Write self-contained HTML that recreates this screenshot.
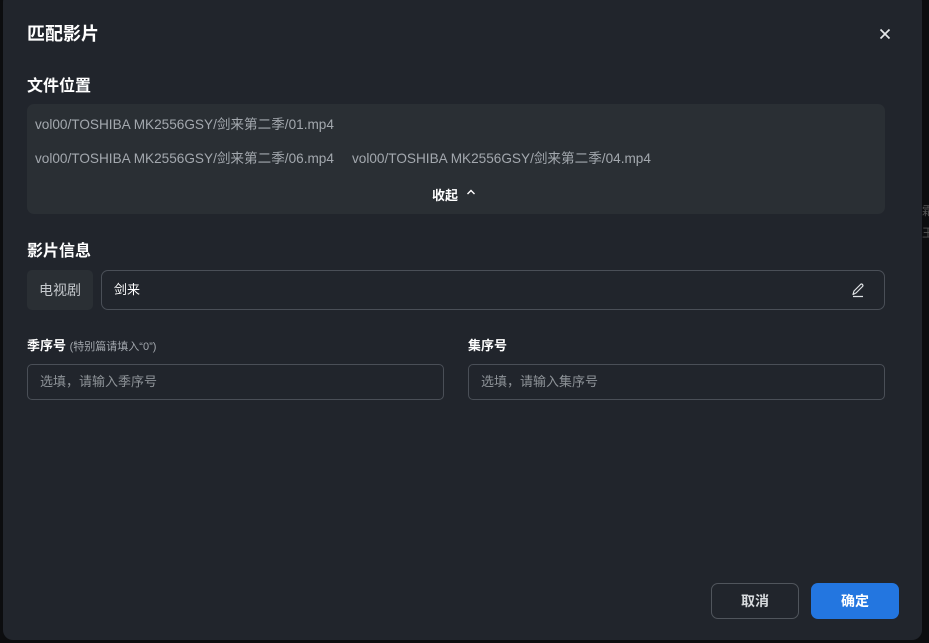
<!DOCTYPE html>
<html><head><meta charset="utf-8"><style>
*{box-sizing:border-box;margin:0;padding:0}
body{width:929px;height:643px;background:#0c0d0f;font-family:"Liberation Sans","Noto Sans CJK SC",sans-serif;position:relative;overflow:hidden}
.side{position:absolute;left:922px;color:#555;font-size:12px}
.dlg{position:absolute;left:3px;top:-8px;width:919px;height:648px;background:#21252c;border-radius:10px}
.abs{position:absolute}
.h{color:#fff;font-weight:bold}
.path{color:#a3a8ae;font-size:13.6px}
</style></head><body>
<div class="side" style="top:202px">霜</div>
<div class="side" style="top:224px">王</div>
<div class="dlg"></div>
<div class="abs h" style="left:27px;top:20px;font-size:18px">匹配影片</div>
<svg class="abs" style="left:879px;top:28px" width="12" height="12" viewBox="0 0 12 12"><path d="M1.5 1.5L10.5 10.5M10.5 1.5L1.5 10.5" stroke="#e6e8ea" stroke-width="1.7"/></svg>
<div class="abs h" style="left:27px;top:72px;font-size:16px">文件位置</div>
<div class="abs" style="left:27px;top:104px;width:858px;height:110px;background:#2a2f34;border-radius:7px"></div>
<div class="abs path" style="left:35px;top:113px">vol00/TOSHIBA MK2556GSY/剑来第二季/01.mp4</div>
<div class="abs path" style="left:35px;top:147px">vol00/TOSHIBA MK2556GSY/剑来第二季/06.mp4</div>
<div class="abs path" style="left:352px;top:147px">vol00/TOSHIBA MK2556GSY/剑来第二季/04.mp4</div>
<div class="abs" style="left:432px;top:185px;color:#fff;font-size:13px;font-weight:bold">收起</div>
<svg class="abs" style="left:466px;top:188px" width="10" height="8" viewBox="0 0 10 8"><path d="M1.5 6L5 2.5L8.5 6" stroke="#fff" stroke-width="1.4" fill="none"/></svg>
<div class="abs h" style="left:27px;top:237px;font-size:16px">影片信息</div>
<div class="abs" style="left:27px;top:270px;width:66px;height:40px;background:#2a2f34;border-radius:5px;color:#c5c9cd;font-size:14px;line-height:40px;text-align:center">电视剧</div>
<div class="abs" style="left:101px;top:270px;width:784px;height:40px;border:1px solid #4a4f57;border-radius:7px;color:#fff;font-size:13px;line-height:38px;padding-left:12px">剑来</div>
<svg class="abs" style="left:851px;top:282px" width="14" height="16" viewBox="0 0 14 16"><path d="M2 12.5L3 9L9.5 2.5Q10.5 1.6 11.5 2.5Q12.4 3.5 11.5 4.5L5 11Z M2 14.5H12" stroke="#dfe2e5" stroke-width="1.2" fill="none" stroke-linejoin="round"/></svg>
<div class="abs" style="left:27px;top:335px;color:#fff;font-size:13px;font-weight:bold">季序号 <span style="font-weight:normal;font-size:11px;color:#a3a8ae">(特别篇请填入“0”)</span></div>
<div class="abs" style="left:468px;top:335px;color:#fff;font-size:13px;font-weight:bold">集序号</div>
<div class="abs" style="left:27px;top:364px;width:417px;height:36px;border:1px solid #4a4f57;border-radius:5px;color:#8e9398;font-size:13px;line-height:34px;padding-left:12px">选填，请输入季序号</div>
<div class="abs" style="left:468px;top:364px;width:417px;height:36px;border:1px solid #4a4f57;border-radius:5px;color:#8e9398;font-size:13px;line-height:34px;padding-left:12px">选填，请输入集序号</div>
<div class="abs" style="left:711px;top:583px;width:88px;height:36px;border:1px solid #50555c;border-radius:7px;color:#d8dbde;font-size:14px;font-weight:bold;line-height:34px;text-align:center">取消</div>
<div class="abs" style="left:811px;top:583px;width:88px;height:36px;background:#2376e0;border-radius:7px;color:#fff;font-size:14px;font-weight:bold;line-height:36px;text-align:center">确定</div>
</body></html>
